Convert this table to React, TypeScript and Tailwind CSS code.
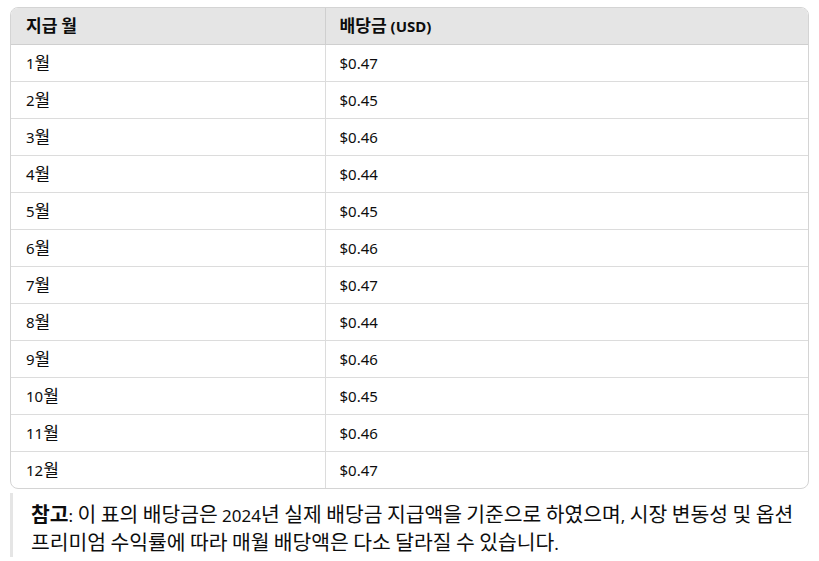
import React from "react";

const ROWS = [
  ["1월", "$0.47"],
  ["2월", "$0.45"],
  ["3월", "$0.46"],
  ["4월", "$0.44"],
  ["5월", "$0.45"],
  ["6월", "$0.46"],
  ["7월", "$0.47"],
  ["8월", "$0.44"],
  ["9월", "$0.46"],
  ["10월", "$0.45"],
  ["11월", "$0.46"],
  ["12월", "$0.47"],
];

// 한글 글자만 조금 크게 (참조 화면의 맑은 고딕 폭에 맞춤)
const HANGUL = /([\uAC00-\uD7A3\u3130-\u318F]+)/;

function K({ text, big }: { text: string; big?: boolean }) {
  return (
    <>
      {text.split(HANGUL).map((part, i) =>
        HANGUL.test(part) ? (
          <span key={i} className={big ? "text-[1.2em]" : "text-[1.14em]"}>
            {part}
          </span>
        ) : (
          part
        )
      )}
    </>
  );
}

export default function App() {
  return (
    <div
      className="bg-white text-[#0d0d0d] px-[10px] pt-[7px] w-[819px] h-[561px] overflow-hidden"
      style={{ fontFamily: '"Noto Sans", "Noto Sans CJK KR", sans-serif' }}
    >
      {/* 표 */}
      <div className="border border-[#d4d4d4] rounded-lg overflow-hidden">
        <table className="w-full border-collapse text-[15px] leading-[20px]">
          <thead>
            <tr className="bg-[#e5e5e5] h-[36px]">
              <th className="w-[314px] text-left font-bold px-[15px] border-r border-b border-[#cfcfcf]">
                <K text="지급 월" />
              </th>
              <th className="text-left font-bold px-[14px] border-b border-[#cfcfcf]">
                <K text="배당금 (USD)" />
              </th>
            </tr>
          </thead>
          <tbody>
            {ROWS.map(([month, amount], i) => (
              <tr key={month} className="h-[37px]">
                <td className={`px-[15px] border-r border-[#dcdcdc] ${i < ROWS.length - 1 ? "border-b" : ""}`}>
                  <K text={month} />
                </td>
                <td className={`px-[14px] border-[#dcdcdc] ${i < ROWS.length - 1 ? "border-b" : ""}`}>{amount}</td>
              </tr>
            ))}
          </tbody>
        </table>
      </div>

      {/* 참고 */}
      <div className="mt-[4px] border-l-[3px] border-[#e5e5e5] pl-[18px] pt-[8px] text-[17px] leading-[27px] break-keep">
        <strong className="font-bold">
          <K text="참고" big />
        </strong>
        <K
          big
          text=": 이 표의 배당금은 2024년 실제 배당금 지급액을 기준으로 하였으며, 시장 변동성 및 옵션 프리미엄 수익률에 따라 매월 배당액은 다소 달라질 수 있습니다."
        />
      </div>
    </div>
  );
}
